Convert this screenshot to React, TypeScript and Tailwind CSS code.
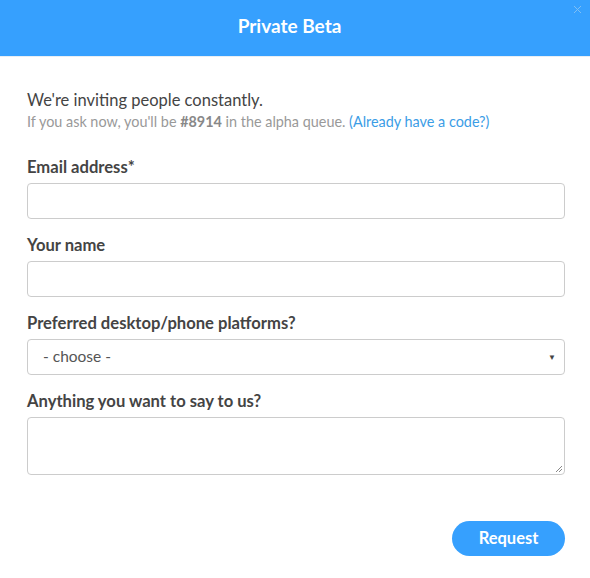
export default function App() {
  const fields = [
    { label: "Email address*", kind: "input" },
    { label: "Your name", kind: "input" },
    { label: "Preferred desktop/phone platforms?", kind: "select" },
    { label: "Anything you want to say to us?", kind: "textarea" },
  ]

  return (
    <div className="w-[590px] h-[578px] bg-white font-['Lato',sans-serif] text-[#444]">
      {/* Header */}
      <div className="relative h-[57px] bg-[#36a0fe] flex items-center justify-center border-b border-[#e8eef4]">
        <h1 className="text-white text-[19px] font-bold -mt-[4px] mr-[11px]">Private Beta</h1>
        <svg className="absolute right-[8px] top-[5px]" width="9" height="9" viewBox="0 0 9 9">
          <path d="M1 1 L8 8 M8 1 L1 8" stroke="#7fbff5" strokeWidth="1" />
        </svg>
      </div>

      <div className="pl-[27px] pr-[25px] pt-[32px]">
        <p className="text-[16.5px] leading-[22px] text-[#444]">We're inviting people constantly.</p>
        <p className="text-[14.4px] leading-[22px] text-[#999]">
          If you ask now, you'll be <b className="text-[#888]">#8914</b> in the alpha queue.{" "}
          <span className="text-[#3b9de6]">(Already have a code?)</span>
        </p>

        <div className="mt-[24px] flex flex-col gap-[16px]">
          {fields.map((f) => (
            <div key={f.label} className="flex flex-col">
              <label className="text-[16.6px] font-bold leading-[20px] text-[#444] mb-[6px]">{f.label}</label>
              {f.kind === "input" && (
                <div className="h-[36px] rounded-[4px] border border-[#ccc]" />
              )}
              {f.kind === "select" && (
                <div className="h-[36px] rounded-[4px] border border-[#ccc] flex items-center justify-between pl-[15px] pr-[8px]">
                  <span className="text-[15.5px] text-[#555]">- choose -</span>
                  <span className="text-[8px] text-[#444]">▼</span>
                </div>
              )}
              {f.kind === "textarea" && (
                <div className="relative h-[58px] rounded-[4px] border border-[#ccc]">
                  <svg className="absolute right-[1px] bottom-[1px]" width="8" height="8" viewBox="0 0 8 8">
                    <path d="M7 1 L1 7 M7 4 L4 7" stroke="#888" strokeWidth="1" />
                  </svg>
                </div>
              )}
            </div>
          ))}
        </div>

        <div className="flex justify-end mt-[46px]">
          <button className="w-[113px] h-[35px] rounded-full bg-[#36a0fe] text-white text-[16.5px] font-bold">
            Request
          </button>
        </div>
      </div>
    </div>
  )
}
